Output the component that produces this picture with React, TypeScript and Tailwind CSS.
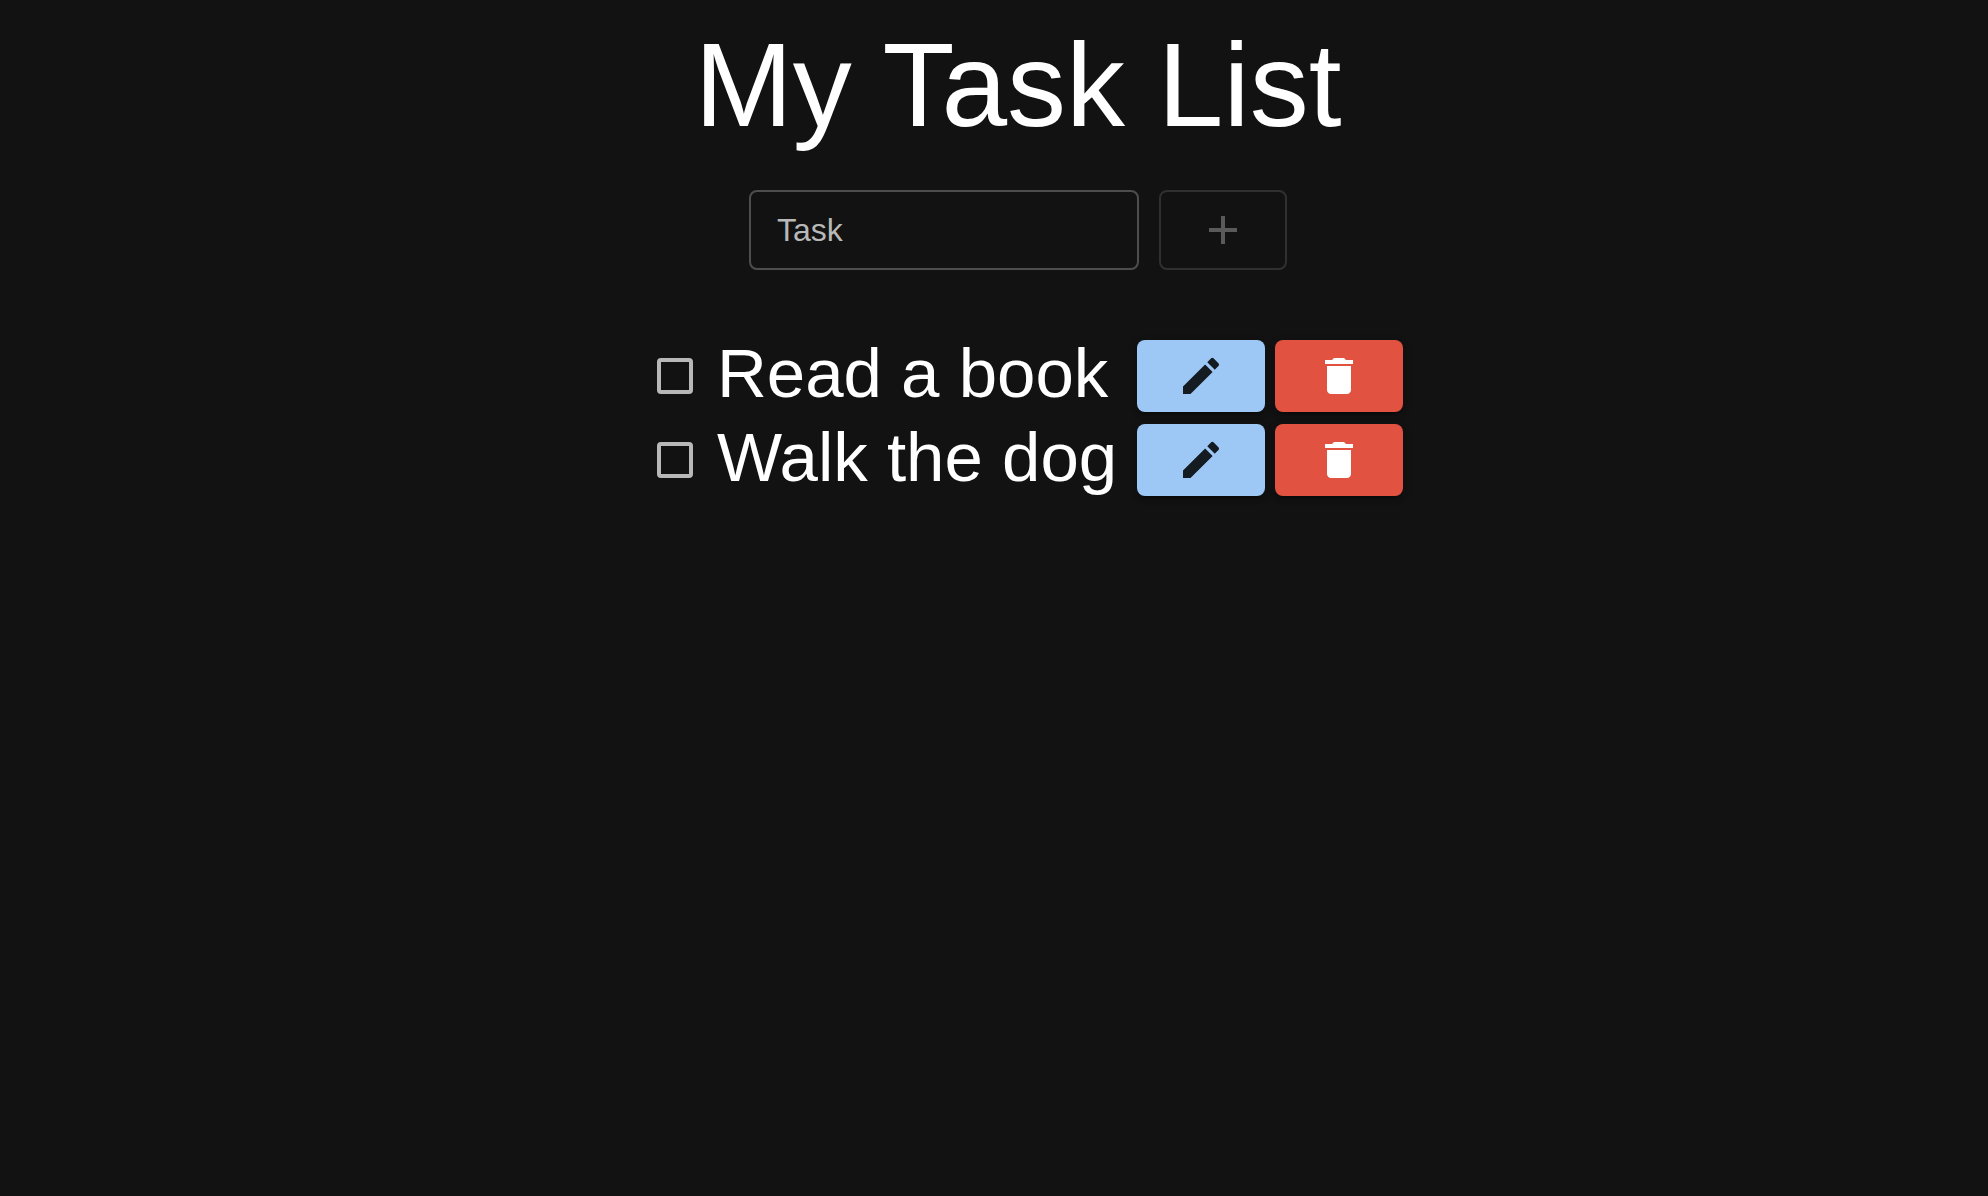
import { useState } from 'react';
import type { FormEvent, ReactNode } from 'react';

type Task = { id: number; name: string; done: boolean };

function Icon({ children }: { children: ReactNode }) {
  return (
    <svg viewBox="0 0 24 24" fill="currentColor" aria-hidden="true" className="size-12">
      {children}
    </svg>
  );
}

const AddIcon = () => (
  <Icon>
    <path d="M19 13h-6v6h-2v-6H5v-2h6V5h2v6h6z" />
  </Icon>
);

const EditIcon = () => (
  <Icon>
    <path d="M3 17.25V21h3.75L17.81 9.94l-3.75-3.75zM20.71 7.04c.39-.39.39-1.02 0-1.41l-2.34-2.34a.996.996 0 0 0-1.41 0l-1.83 1.83 3.75 3.75z" />
  </Icon>
);

const DeleteIcon = () => (
  <Icon>
    <path d="M6 19c0 1.1.9 2 2 2h8c1.1 0 2-.9 2-2V7H6zM19 4h-3.5l-1-1h-5l-1 1H5v2h14z" />
  </Icon>
);

const actionButton =
  'flex h-18 w-32 shrink-0 items-center justify-center rounded-lg shadow-[0_6px_2px_-4px_rgba(0,0,0,0.2),0_4px_4px_0_rgba(0,0,0,0.14),0_2px_10px_0_rgba(0,0,0,0.12)]';

function TaskRow({ task, onToggle, onDelete }: { task: Task; onToggle: () => void; onDelete: () => void }) {
  const inputId = `task-${task.id}`;
  return (
    <li className="flex h-21 items-center">
      <input
        id={inputId}
        type="checkbox"
        checked={task.done}
        onChange={onToggle}
        className="m-6 size-9 shrink-0 appearance-none rounded-sm border-4 border-[#b8b8b8] checked:bg-[#9dc8f6]"
      />
      <label htmlFor={inputId} className="flex-1 pb-1 text-[69px] leading-[80px] whitespace-nowrap">
        {task.name}
      </label>
      <div className="flex gap-2.5">
        <button type="button" aria-label={`Edit ${task.name}`} className={`${actionButton} bg-[#9dc8f6] text-[#141b21]`}>
          <EditIcon />
        </button>
        <button
          type="button"
          aria-label={`Delete ${task.name}`}
          onClick={onDelete}
          className={`${actionButton} bg-[#e15241] text-white`}
        >
          <DeleteIcon />
        </button>
      </div>
    </li>
  );
}

export default function App() {
  const [draft, setDraft] = useState('');
  const [tasks, setTasks] = useState<Task[]>([
    { id: 1, name: 'Read a book', done: false },
    { id: 2, name: 'Walk the dog', done: false },
  ]);

  const addTask = (event: FormEvent) => {
    event.preventDefault();
    if (!draft.trim()) return;
    setTasks([...tasks, { id: Date.now(), name: draft.trim(), done: false }]);
    setDraft('');
  };

  return (
    <main className="flex min-h-screen flex-col items-center bg-[#121212] pt-3 pl-12 font-['Liberation_Sans',Arial,sans-serif] text-white">
      <h1 className="text-[118px] leading-[146px]">My Task List</h1>

      <form onSubmit={addTask} className="mt-8 flex gap-5">
        <input
          type="text"
          aria-label="Task"
          placeholder="Task"
          value={draft}
          onChange={(event) => setDraft(event.target.value)}
          className="h-20 w-[390px] rounded-lg border-2 border-[#4d4d4d] bg-transparent px-[26px] text-[32px] placeholder:text-[#b8b8b8]"
        />
        <button
          type="submit"
          aria-label="Add task"
          disabled={!draft.trim()}
          className="flex h-20 w-32 items-center justify-center rounded-lg border-2 border-[#9dc8f6] text-[#9dc8f6] disabled:border-[#303030] disabled:text-[#5a5a5a]"
        >
          <AddIcon />
        </button>
      </form>

      <ul className="mt-16 w-full max-w-[770px]">
        {tasks.map((task) => (
          <TaskRow
            key={task.id}
            task={task}
            onToggle={() => setTasks(tasks.map((t) => (t.id === task.id ? { ...t, done: !t.done } : t)))}
            onDelete={() => setTasks(tasks.filter((t) => t.id !== task.id))}
          />
        ))}
      </ul>
    </main>
  );
}
